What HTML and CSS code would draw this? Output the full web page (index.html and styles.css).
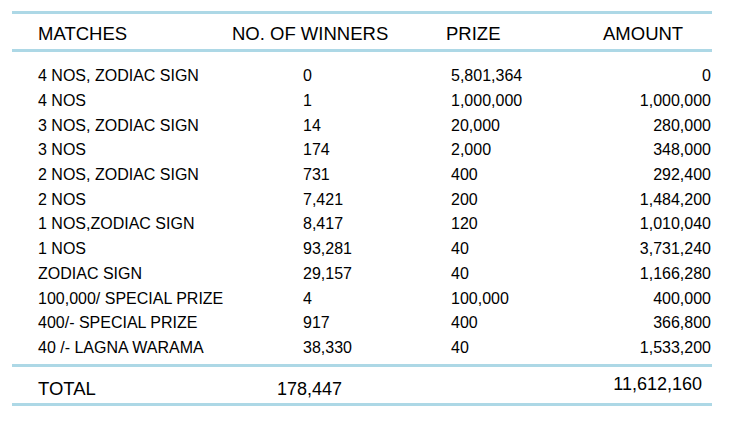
FILE: index.html
```html
<!DOCTYPE html>
<html>
<head>
<meta charset="utf-8">
<link rel="stylesheet" href="styles.css">
</head>
<body>
<div class="results">
  <div class="head-row">
    <div>MATCHES</div>
    <div>NO. OF WINNERS</div>
    <div>PRIZE</div>
    <div>AMOUNT</div>
  </div>
  <div class="rows">
    <div class="row"><div>4 NOS, ZODIAC SIGN</div><div>0</div><div>5,801,364</div><div class="amt">0</div></div>
    <div class="row"><div>4 NOS</div><div>1</div><div>1,000,000</div><div class="amt">1,000,000</div></div>
    <div class="row"><div>3 NOS, ZODIAC SIGN</div><div>14</div><div>20,000</div><div class="amt">280,000</div></div>
    <div class="row"><div>3 NOS</div><div>174</div><div>2,000</div><div class="amt">348,000</div></div>
    <div class="row"><div>2 NOS, ZODIAC SIGN</div><div>731</div><div>400</div><div class="amt">292,400</div></div>
    <div class="row"><div>2 NOS</div><div>7,421</div><div>200</div><div class="amt">1,484,200</div></div>
    <div class="row"><div>1 NOS,ZODIAC SIGN</div><div>8,417</div><div>120</div><div class="amt">1,010,040</div></div>
    <div class="row"><div>1 NOS</div><div>93,281</div><div>40</div><div class="amt">3,731,240</div></div>
    <div class="row"><div>ZODIAC SIGN</div><div>29,157</div><div>40</div><div class="amt">1,166,280</div></div>
    <div class="row"><div>100,000/ SPECIAL PRIZE</div><div>4</div><div>100,000</div><div class="amt">400,000</div></div>
    <div class="row"><div>400/- SPECIAL PRIZE</div><div>917</div><div>400</div><div class="amt">366,800</div></div>
    <div class="row"><div>40 /- LAGNA WARAMA</div><div>38,330</div><div>40</div><div class="amt">1,533,200</div></div>
  </div>
  <div class="total-row">
    <div class="total-label">TOTAL</div>
    <div class="total-num">178,447</div>
    <div class="total-amt">11,612,160</div>
  </div>
</div>
</body>
</html>
```
FILE: styles.css
```css
html, body {
  margin: 0;
  padding: 0;
  background: #ffffff;
}
body {
  font-family: "Liberation Sans", Arial, sans-serif;
  color: #000000;
}
.results {
  margin: 11px 0 0 12px;
  width: 700px;
  border-top: 3px solid #add8e6;
  border-bottom: 3px solid #add8e6;
}
.head-row {
  display: grid;
  grid-template-columns: 194px 214px 157px 1fr;
  padding: 9px 0 4px 26px;
  font-size: 18.5px;
  line-height: 22px;
  border-bottom: 3px solid #add8e6;
}
.rows {
  padding: 12px 1px 3.5px 26px;
  border-bottom: 3px solid #add8e6;
}
.row {
  display: grid;
  grid-template-columns: 265px 148px 109px 1fr;
  height: 24.7px;
  align-items: center;
  font-size: 16px;
  line-height: 18px;
}
.amt {
  text-align: right;
}
.total-row {
  display: grid;
  grid-template-columns: 239px 1fr auto;
  align-items: start;
  padding: 0 10px 0 26px;
  height: 36px;
}
.total-label {
  font-size: 18.5px;
  line-height: 22px;
  padding-top: 11px;
}
.total-num {
  font-size: 18px;
  line-height: 22px;
  padding-top: 11.5px;
}
.total-amt {
  font-size: 18px;
  line-height: 22px;
  padding-top: 6px;
}
```
